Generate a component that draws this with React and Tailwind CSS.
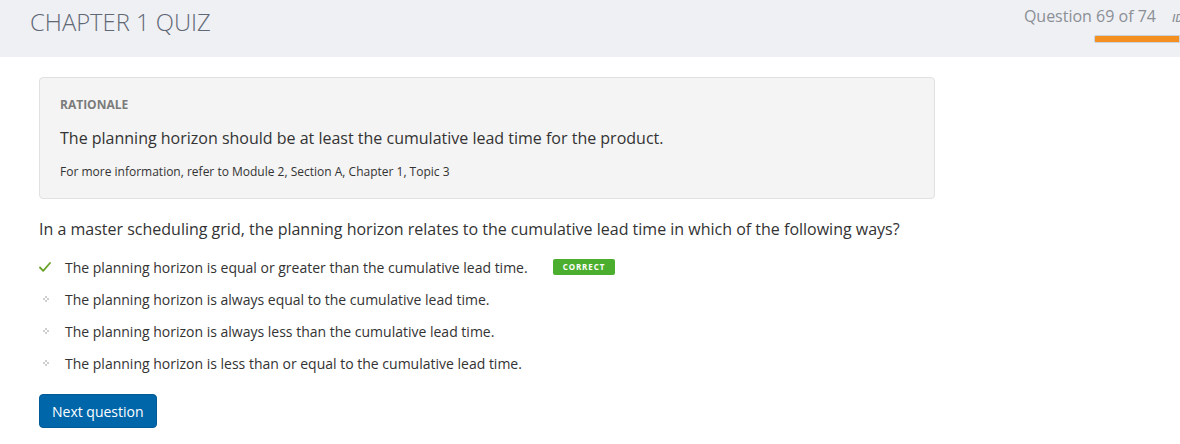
import React from "react";

const options = [
  { text: "The planning horizon is equal or greater than the cumulative lead time.", correct: true },
  { text: "The planning horizon is always equal to the cumulative lead time." },
  { text: "The planning horizon is always less than the cumulative lead time." },
  { text: "The planning horizon is less than or equal to the cumulative lead time." },
];

function Diamond() {
  return (
    <svg width="6" height="6" viewBox="0 0 6 6" className="block">
      <rect x="2" y="0" width="2" height="2" fill="#cfcfcf" />
      <rect x="0" y="2" width="2" height="2" fill="#cfcfcf" />
      <rect x="4" y="2" width="2" height="2" fill="#cfcfcf" />
      <rect x="2" y="4" width="2" height="2" fill="#cfcfcf" />
    </svg>
  );
}

function Check() {
  return (
    <svg width="12" height="10" viewBox="0 0 12 10" className="block">
      <path d="M1 5.5 L4.2 8.8 L11 1" fill="none" stroke="#6aa32a" strokeWidth="1.8" strokeLinecap="round" strokeLinejoin="round" />
    </svg>
  );
}

export default function App() {
  return (
    <div className="w-[1180px] h-[444px] overflow-hidden bg-white" style={{ fontFamily: '"Open Sans", sans-serif' }}>
      <div className="h-[57px] bg-[#eff0f4] flex justify-between">
        <div className="pl-[30px] pt-[5px] text-[23.8px] font-light text-[#5f6875]">CHAPTER 1 QUIZ</div>
        <div className="flex flex-col items-end pt-[4px]">
          <div className="flex items-baseline text-[16px] text-[#8a8f96] whitespace-nowrap">
            <span>Question 69 of 74</span>
            <span className="ml-[16px] italic text-[11px] font-semibold w-[8px] overflow-hidden">ID</span>
          </div>
          <div className="mt-[7px] w-[86px] h-[8px] bg-[#f39020] border border-[#c9d2dd] rounded-l-[2px]" />
        </div>
      </div>

      <div className="pl-[39px] pt-[20px] w-[935px]">
        <div className="bg-[#f4f4f4] border border-[#e1e1e1] rounded-[4px] pl-[20px] pt-[19px] pb-[18px]">
          <div className="text-[12px] font-bold text-[#7b7b7b] leading-[16px]">RATIONALE</div>
          <div className="mt-[14px] text-[16px] text-[#333] leading-[22px]">The planning horizon should be at least the cumulative lead time for the product.</div>
          <div className="mt-[15px] text-[12px] text-[#333] leading-[16px]">For more information, refer to Module 2, Section A, Chapter 1, Topic 3</div>
        </div>

        <div className="mt-[19px] text-[16px] text-[#333] leading-[22px]">In a master scheduling grid, the planning horizon relates to the cumulative lead time in which of the following ways?</div>

        <div className="mt-[11px] flex flex-col">
          {options.map((o, i) => (
            <div key={i} className="h-[32px] flex items-center text-[14px] text-[#333]">
              <div className="w-[26px] flex items-center">
                {o.correct ? <Check /> : <span className="pl-[4px]"><Diamond /></span>}
              </div>
              <span>{o.text}</span>
              {o.correct && (
                <span className="ml-[25px] bg-[#4cae2e] text-white text-[8px] font-bold tracking-[0.9px] px-[10px] h-[16px] flex items-center rounded-[2px]">CORRECT</span>
              )}
            </div>
          ))}
        </div>

        <button className="mt-[15px] h-[34px] px-[12px] bg-[#0066aa] text-white text-[14px] rounded-[4px] border border-[#005a96]">Next question</button>
      </div>
    </div>
  );
}
